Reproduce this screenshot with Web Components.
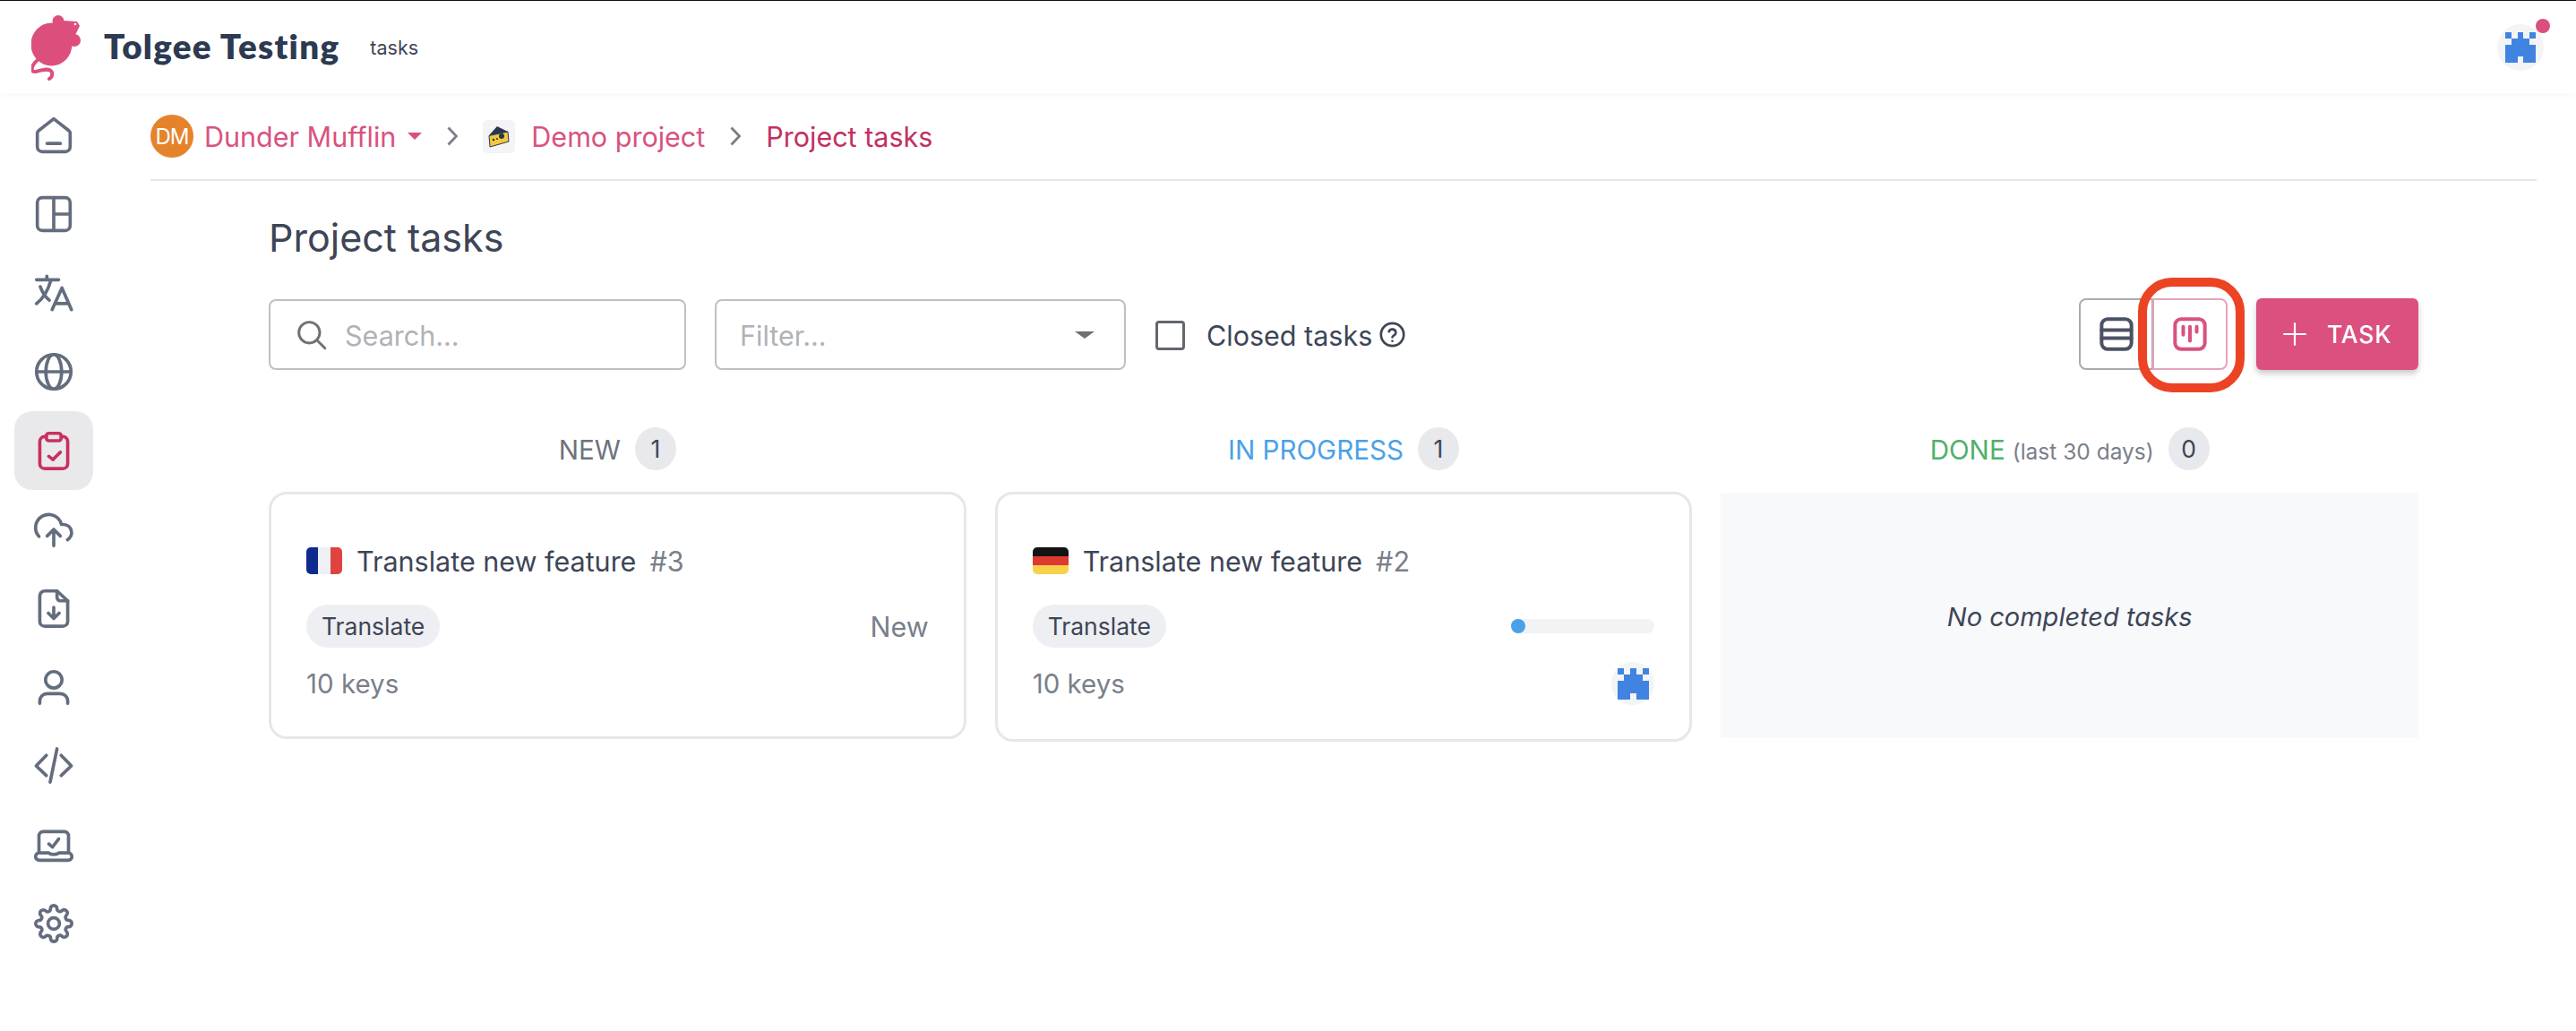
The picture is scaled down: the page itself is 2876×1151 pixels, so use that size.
<!DOCTYPE html>
<html lang="en">
<head>
<meta charset="utf-8">
<title>Project tasks</title>
<style>
    html, body { margin: 0; background: #fff; }
    body { font-family: Inter, "Liberation Sans", sans-serif; color: #3d4556; }
</style>
</head>
<body>
<tg-app></tg-app>
<script>
// icons, all drawn on a 24 unit grid with round strokes
const ICONS = {
    home: `<path d="M12 2l9.3 7.3a2 2 0 0 1 .7 1.5V19a3 3 0 0 1-3 3H5a3 3 0 0 1-3-3v-8.200a2 2 0 0 1 .7-1.500z"/><path d="M8 17h8"/>`,
    layout: `<rect x="2" y="2" width="20" height="20" rx="3"/><path d="M12 2v20M12 12h10"/>`,
    translate: `<path d="M1.500 4h13.500M7.800 1.800V4M10.200 4.500C8.500 10.500 5.500 15.500 1.500 18.500M3.800 8.200c1.200 3.200 3 6.200 5.500 8.200M11 22.200L17 9l5.800 13.200M13 18.500h8"/>`,
    globe: `<circle cx="12" cy="12" r="10.500"/><path d="M1.500 12h21"/><ellipse cx="12" cy="12" rx="4.800" ry="10.500"/>`,
    clipboard: `<path d="M7.500 3.500h-1a3 3 0 0 0-3 3V20a3 3 0 0 0 3 3h11a3 3 0 0 0 3-3V6.500a3 3 0 0 0-3-3h-1"/><rect x="7.500" y="1.500" width="9" height="4.500" rx="1.500"/><path d="M9 15.500l2.500 2L16 13"/>`,
    upload: `<path d="M16 16l-4-4-4 4M12 12v10"/><path d="M20.400 18.300A5 5 0 0 0 18 9h-1.300A8 8 0 1 0 3 16.300"/>`,
    file: `<path d="M14 1.500H6.500a3 3 0 0 0-3 3V20a3 3 0 0 0 3 3h11a3 3 0 0 0 3-3V7.500z"/><path d="M14 1.500V5.500a2 2 0 0 0 2 2h4.500M12 11.500v6.500M8.700 15l3.300 3.300 3.300-3.300"/>`,
    user: `<circle cx="12" cy="7.600" r="5"/><path d="M3.500 22v-1.500a4.500 4.500 0 0 1 4.500-4.500h8a4.500 4.500 0 0 1 4.500 4.500V22"/>`,
    code: `<path d="M7.500 5.600L1.300 12l6.200 5.900M16.500 5.600l6.200 6.400-6.200 5.900M14 1.600L9.800 21.900"/>`,
    laptop: `<path d="M3 17V6.500A2.500 2.500 0 0 1 5.500 4h13A2.500 2.500 0 0 1 21 6.500V17"/><path d="M3.200 17H9c1 1.300 5 1.300 6 0h5.800a2.200 2.200 0 0 1 0 4.500H3.200a2.200 2.200 0 0 1 0-4.500z"/><path d="M9 11.500l2.200 2L15 8.500"/>`,
    gear: `<circle cx="12" cy="12" r="3.500"/><path d="M19.400 15a1.650 1.650 0 0 0 .33 1.820l.06.06a2 2 0 0 1 0 2.830 2 2 0 0 1-2.830 0l-.06-.06a1.650 1.650 0 0 0-1.820-.33 1.650 1.650 0 0 0-1 1.510V21a2 2 0 0 1-2 2 2 2 0 0 1-2-2v-.09A1.650 1.650 0 0 0 9 19.400a1.650 1.650 0 0 0-1.820.33l-.06.06a2 2 0 0 1-2.830 0 2 2 0 0 1 0-2.830l.06-.06a1.650 1.650 0 0 0 .33-1.820 1.650 1.650 0 0 0-1.510-1H3a2 2 0 0 1-2-2 2 2 0 0 1 2-2h.09A1.650 1.650 0 0 0 4.600 9a1.650 1.650 0 0 0-.33-1.820l-.06-.06a2 2 0 0 1 0-2.830 2 2 0 0 1 2.830 0l.06.06a1.650 1.650 0 0 0 1.820.33H9a1.650 1.650 0 0 0 1-1.510V3a2 2 0 0 1 2-2 2 2 0 0 1 2 2v.09a1.650 1.650 0 0 0 1 1.510 1.650 1.650 0 0 0 1.820-.33l.06-.06a2 2 0 0 1 2.830 0 2 2 0 0 1 0 2.830l-.06.06a1.650 1.650 0 0 0-.33 1.820V9a1.650 1.650 0 0 0 1.510 1H21a2 2 0 0 1 2 2 2 2 0 0 1-2 2h-.09a1.650 1.650 0 0 0-1.510 1z"/>`,
    search: `<circle cx="10.500" cy="10.500" r="8"/><path d="M16.500 16.500l6 6"/>`,
    help: `<circle cx="12" cy="12" r="10.500"/><path d="M8.800 9.300a3.300 3.300 0 0 1 6.400 1c0 2.200-3.200 2.700-3.200 4.200"/><path d="M12 18h.01"/>`,
    rows: `<rect x="2" y="2" width="20" height="20" rx="4"/><path d="M2 9.300h20M2 14.700h20"/>`,
    kanban: `<rect x="2" y="2" width="20" height="20" rx="4"/><path d="M7.500 7v5.500M12 7v9.500M16.500 7v3.500"/>`,
    plus: `<path d="M12 1v22M1 12h22"/>`
}

class TgIcon extends HTMLElement {
    connectedCallback() {
        const size = this.getAttribute('size') || 44
        const width = this.getAttribute('stroke') || 2
        this.attachShadow({ mode: 'open' })
        this.shadowRoot.innerHTML = `
      <style>
        :host { display: block; width: ${size}px; height: ${size}px; flex: none; }
        svg { display: block; width: 100%; height: 100%; fill: none; stroke: currentColor; stroke-linecap: round; stroke-linejoin: round; overflow: visible; }
      </style>
      <svg viewBox="0 0 24 24" stroke-width="${width}">${ICONS[this.getAttribute('name')]}</svg>
    `
    }
}
customElements.define('tg-icon', TgIcon)

// the blue pixel castle avatar
class TgCastle extends HTMLElement {
    connectedCallback() {
        const size = this.getAttribute('size') || 48
        const cell = this.getAttribute('cell') || 34
        this.attachShadow({ mode: 'open' })
        this.shadowRoot.innerHTML = `
      <style>
        :host { display: flex; align-items: center; justify-content: center; width: ${size}px; height: ${size}px; border-radius: 50%; background: #f3f4f6; flex: none; }
        svg { display: block; width: ${cell}px; height: ${cell}px; fill: #4183e0; shape-rendering: crispEdges; }
      </style>
      <svg viewBox="0 0 5 5">
        <rect x="0" y="0" width="1" height="1"/><rect x="2" y="0" width="1" height="1"/><rect x="4" y="0" width="1" height="1"/>
        <rect x="1" y="1" width="3" height="1"/>
        <rect x="0" y="2" width="5" height="2"/>
        <rect x="0" y="4" width="2" height="1"/><rect x="3" y="4" width="2" height="1"/>
      </svg>
    `
    }
}
customElements.define('tg-castle', TgCastle)

class TgHeader extends HTMLElement {
    connectedCallback() {
        this.attachShadow({ mode: 'open' })
        this.shadowRoot.innerHTML = `
      <style>
        :host { display: flex; align-items: center; border-top: 1px solid #111; background: #fff; box-sizing: border-box; height: 104px; padding: 0 36px 0 35px; box-shadow: 0 3px 8px rgba(60,70,90,.04); position: relative; }
        .logo { width: 55px; height: 73px; display: block; margin-top: 1px; }
        .name { font: 800 38.500px Lato, sans-serif; color: #2c3a52; margin: -3px 0 0 26px; letter-spacing: 1.300px; }
        .tag { font-size: 21.500px; color: #3d4556; margin-left: 34px; }
        .user { margin-left: auto; position: relative; margin-top: 1px; }
        .dot { position: absolute; top: -6px; right: -7px; width: 16px; height: 16px; border-radius: 50%; background: #dc4f7d; }
      </style>
      <svg class="logo" viewBox="35 16 55 73" fill="#dc4f7d">
        <ellipse cx="57.500" cy="48.500" rx="23" ry="24"/>
        <path d="M60 26 L70 22 L86 23 L89 28 L84 38 L80 50 L60 50 Z"/>
        <circle cx="65" cy="22.500" r="6.500"/>
        <circle cx="83" cy="44" r="7"/>
        <circle cx="84" cy="26" r="1.300" fill="#fff"/>
        <path d="M42 66 C35 72 33 80 40 79 C47 77 56 74 58 80 C59 83 57 86 55 87" fill="none" stroke="#dc4f7d" stroke-width="4" stroke-linecap="round"/>
      </svg>
      <div class="name">Tolgee Testing</div>
      <div class="tag">tasks</div>
      <div class="user">
        <tg-castle size="52" cell="34"></tg-castle>
        <div class="dot"></div>
      </div>
    `
    }
}
customElements.define('tg-header', TgHeader)

class TgSidebar extends HTMLElement {
    connectedCallback() {
        const items = ['home', 'layout', 'translate', 'globe', 'clipboard', 'upload', 'file', 'user', 'code', 'laptop', 'gear']
        this.attachShadow({ mode: 'open' })
        this.shadowRoot.innerHTML = `
      <style>
        :host { display: flex; flex-direction: column; width: 120px; padding: 3px 16px 0; box-sizing: border-box; flex: none; color: #646d7e; }
        .item { display: flex; align-items: center; justify-content: center; width: 88px; height: 88px; border-radius: 20px; }
        .active { background: #e9e9eb; color: #c9305f; }
      </style>
      ${items.map(name => `<div class="item ${name === 'clipboard' ? 'active' : ''}"><tg-icon name="${name}"></tg-icon></div>`).join('')}
    `
    }
}
customElements.define('tg-sidebar', TgSidebar)

class TgBreadcrumbs extends HTMLElement {
    connectedCallback() {
        const chevron = `<svg class="chev" viewBox="0 0 12 22"><path d="M1.500 1.500L10.500 11L1.500 20.500"/></svg>`
        this.attachShadow({ mode: 'open' })
        this.shadowRoot.innerHTML = `
      <style>
        :host { display: flex; align-items: center; height: 98px; border-bottom: 2px solid #e4e6ea; box-sizing: border-box; font-size: 30.500px; color: #d9527f; }
        .avatar { width: 48px; height: 48px; border-radius: 50%; background: #e5832b; color: #fff; display: flex; align-items: center; justify-content: center; font-size: 24px; letter-spacing: -1px; }
        .org { margin-left: 12px; }
        .caret { width: 0; height: 0; border-left: 8px solid transparent; border-right: 8px solid transparent; border-top: 8px solid #d9527f; margin-left: 13px; }
        .chev { width: 12px; height: 22px; fill: none; stroke: #7b7f86; stroke-width: 2.800; margin: 0 28px; flex: none; }
        .first { margin-left: 28px; margin-right: 28px; }
        .cheese { width: 36px; height: 37px; background: #f3f4f6; border-radius: 5px; display: flex; align-items: center; justify-content: center; margin-right: 18px; }
        .cheese svg { width: 24px; height: 25px; display: block; }
        .current { color: #c3305f; }
      </style>
      <div class="avatar">DM</div>
      <div class="org">Dunder Mufflin</div>
      <div class="caret"></div>
      ${chevron.replace('chev', 'chev first')}
      <div class="cheese">
        <svg viewBox="0 0 24 25">
          <path d="M1 11 L10 1 L22 7 L22 9 Z" fill="#27374f"/>
          <path d="M1 11.500 L22 7 L23 18 L2 24 Z" fill="#f4c83c" stroke="#27374f" stroke-width="1"/>
          <circle cx="15" cy="12" r="3" fill="#27374f"/>
          <circle cx="6" cy="16" r="1.300" fill="#27374f"/>
          <circle cx="10" cy="15" r="1" fill="#27374f"/>
        </svg>
      </div>
      <div>Demo project</div>
      ${chevron}
      <div class="current">Project tasks</div>
    `
    }
}
customElements.define('tg-breadcrumbs', TgBreadcrumbs)

class TgField extends HTMLElement {
    connectedCallback() {
        this.attachShadow({ mode: 'open' })
        this.shadowRoot.innerHTML = `
      <style>
        :host { display: flex; align-items: center; height: 79px; border: 2px solid #bfc0c4; border-radius: 8px; box-sizing: border-box; padding: 2px 27px 0 26px; font-size: 30.500px; color: #b0b2b7; flex: none; }
        ::slotted(tg-icon) { color: #6f7174; margin: -2px 20px 0 2px; }
        .caret { margin-left: auto; }
      </style>
      <slot name="icon"></slot>
      <slot></slot>
      <span class="caret"><slot name="end"></slot></span>
    `
    }
}
customElements.define('tg-field', TgField)

class TgViewToggle extends HTMLElement {
    connectedCallback() {
        this.attachShadow({ mode: 'open' })
        this.shadowRoot.innerHTML = `
      <style>
        :host { display: flex; position: relative; height: 80px; flex: none; }
        .btn { width: 83px; box-sizing: border-box; display: flex; align-items: center; justify-content: center; border: 2px solid #a9abb1; border-radius: 8px 0 0 8px; color: #4b5263; }
        .on { border: 2px solid #e6a4bb; border-radius: 0 8px 8px 0; color: #d9527f; margin-left: -1px; width: 84px; }
        .mark { position: absolute; left: 66px; top: -23px; width: 119px; height: 128px; border: 10px solid #ec4324; border-radius: 38px; box-sizing: border-box; }
      </style>
      <div class="btn"><tg-icon name="rows" size="40" stroke="2.400"></tg-icon></div>
      <div class="btn on"><tg-icon name="kanban" size="40" stroke="2.400"></tg-icon></div>
      <div class="mark"></div>
    `
    }
}
customElements.define('tg-view-toggle', TgViewToggle)

class TgToolbar extends HTMLElement {
    connectedCallback() {
        this.attachShadow({ mode: 'open' })
        this.shadowRoot.innerHTML = `
      <style>
        :host { display: flex; align-items: center; height: 80px; }
        .search { width: 466px; }
        .filter { width: 459px; margin-left: 32px; }
        .drop { display: block; width: 0; height: 0; border-left: 11px solid transparent; border-right: 11px solid transparent; border-top: 8px solid #6f7174; margin-right: 6px; }
        .check { width: 33px; height: 33px; box-sizing: border-box; border: 3px solid #62666f; border-radius: 4px; margin: 2px 0 0 33px; flex: none; }
        .closed { font-size: 30.500px; color: #3d4556; margin: 2px 0 0 24px; }
        .help { margin: 1px 0 0 8px; color: #3d4556; }
        .toggle { margin-left: auto; }
        .add { display: flex; align-items: center; width: 181px; height: 80px; margin-left: 32px; box-sizing: border-box; padding-left: 30px; background: #db507e; color: #fff; border-radius: 6px; font-size: 26.500px; font-weight: 500; letter-spacing: .8px; box-shadow: 0 4px 6px rgba(60,60,70,.28); flex: none; }
        .add span { margin-left: 23px; }
      </style>
      <tg-field class="search"><tg-icon slot="icon" name="search" size="35" stroke="2"></tg-icon>Search...</tg-field>
      <tg-field class="filter">Filter...<i slot="end" class="drop"></i></tg-field>
      <div class="check"></div>
      <div class="closed">Closed tasks</div>
      <tg-icon class="help" name="help" size="29" stroke="2.200"></tg-icon>
      <tg-view-toggle class="toggle"></tg-view-toggle>
      <div class="add"><tg-icon name="plus" size="26" stroke="2"></tg-icon><span>TASK</span></div>
    `
    }
}
customElements.define('tg-toolbar', TgToolbar)

class TgColumn extends HTMLElement {
    connectedCallback() {
        const note = this.getAttribute('note')
        this.attachShadow({ mode: 'open' })
        this.shadowRoot.innerHTML = `
      <style>
        :host { display: flex; flex-direction: column; min-width: 0; }
        .head { display: flex; align-items: center; justify-content: center; height: 48px; margin-bottom: 24px; font-size: 29.600px; color: ${this.getAttribute('color')}; }
        .label { margin-top: 2px; }
        .note { font-size: 24.500px; color: #7a7f8a; margin-left: 8px; margin-top: 5px; }
        .count { width: 46px; height: 48px; border-radius: 50%; background: #e8e9ec; color: #3d4556; display: flex; align-items: center; justify-content: center; font-size: 26.500px; margin-left: 16px; }
      </style>
      <div class="head">
        <span class="label">${this.getAttribute('title')}</span>
        ${note ? `<span class="note">${note}</span>` : ''}
        <span class="count">${this.getAttribute('count')}</span>
      </div>
      <slot></slot>
    `
    }
}
customElements.define('tg-column', TgColumn)

class TgFlag extends HTMLElement {
    connectedCallback() {
        const stripes = this.getAttribute('lang') === 'fr'
            ? 'linear-gradient(90deg, #0f2a8f 33.300%, #eff0f3 33.300% 66.600%, #e0433f 66.600%)'
            : 'linear-gradient(180deg, #131313 33.300%, #dd3a2f 33.300% 66.600%, #f7d148 66.600%)'
        this.attachShadow({ mode: 'open' })
        this.shadowRoot.innerHTML = `
      <style>
        :host { display: block; width: 40px; height: 30px; border-radius: 5px; background: ${stripes}; flex: none; }
      </style>
    `
    }
}
customElements.define('tg-flag', TgFlag)

class TgCard extends HTMLElement {
    connectedCallback() {
        this.attachShadow({ mode: 'open' })
        this.shadowRoot.innerHTML = `
      <style>
        :host { display: block; border: 3px solid #e5e7eb; border-radius: 20px; box-sizing: border-box; padding: 56px 39px 0; font-size: 30.500px; height: ${this.getAttribute('height')}px; background: #fff; }
        .title { display: flex; align-items: center; height: 36px; color: #3d4556; }
        .name { margin-left: 16px; }
        .num { margin-left: 15px; color: #7a7f8a; }
        .row { display: flex; align-items: center; justify-content: space-between; margin-top: 31px; height: 48px; }
        .chip { display: flex; align-items: center; padding: 0 17px; height: 48px; border-radius: 24px; background: #eeeff2; font-size: 26.500px; color: #3d4556; }
        .foot { display: flex; align-items: center; justify-content: space-between; margin-top: 16px; height: 48px; color: #7a7f8a; font-size: 29.500px; }
      </style>
      <div class="title">
        <slot name="flag"></slot>
        <span class="name">${this.getAttribute('name')}</span>
        <span class="num">${this.getAttribute('num')}</span>
      </div>
      <div class="row">
        <span class="chip">Translate</span>
        <slot name="state"></slot>
      </div>
      <div class="foot">
        <span>10 keys</span>
        <slot name="assignee"></slot>
      </div>
    `
    }
}
customElements.define('tg-card', TgCard)

class TgProgress extends HTMLElement {
    connectedCallback() {
        this.attachShadow({ mode: 'open' })
        this.shadowRoot.innerHTML = `
      <style>
        :host { display: block; width: 160px; height: 16px; border-radius: 8px; background: #f1f3f5; }
        div { width: 16px; height: 16px; border-radius: 50%; background: #4ba1e8; }
      </style>
      <div></div>
    `
    }
}
customElements.define('tg-progress', TgProgress)

class TgEmpty extends HTMLElement {
    connectedCallback() {
        this.attachShadow({ mode: 'open' })
        this.shadowRoot.innerHTML = `
      <style>
        :host { display: flex; align-items: center; justify-content: center; height: 274px; margin-top: 1px; padding-top: 3px; box-sizing: border-box; background: #f8f9fb; font-style: italic; font-size: 29px; color: #3d4556; }
      </style>
      <slot></slot>
    `
    }
}
customElements.define('tg-empty', TgEmpty)

class TgApp extends HTMLElement {
    connectedCallback() {
        this.attachShadow({ mode: 'open' })
        this.shadowRoot.innerHTML = `
      <style>
        :host { display: block; min-height: 1151px; background: #fff; }
        .body { display: flex; }
        main { flex: 1; min-width: 0; padding: 0 44px 0 48px; }
        .page { width: 2400px; margin-left: 132px; }
        h1 { margin: 0; font-size: 43px; font-weight: 400; line-height: 54px; color: #3d4556; padding-top: 36px; margin-bottom: 41px; }
        .board { display: grid; grid-template-columns: repeat(3, 1fr); gap: 32px; align-items: start; margin-top: 64px; }
      </style>
      <tg-header></tg-header>
      <div class="body">
        <tg-sidebar></tg-sidebar>
        <main>
          <tg-breadcrumbs></tg-breadcrumbs>
          <div class="page">
            <h1>Project tasks</h1>
            <tg-toolbar></tg-toolbar>
            <div class="board">
              <tg-column title="NEW" count="1" color="#6d7380">
                <tg-card name="Translate new feature" num="#3" height="276">
                  <tg-flag slot="flag" lang="fr"></tg-flag>
                  <span slot="state" style="color:#7a7f8a">New</span>
                </tg-card>
              </tg-column>
              <tg-column title="IN PROGRESS" count="1" color="#4ba1e8">
                <tg-card name="Translate new feature" num="#2" height="279">
                  <tg-flag slot="flag" lang="de"></tg-flag>
                  <tg-progress slot="state"></tg-progress>
                  <tg-castle slot="assignee" size="48" cell="35"></tg-castle>
                </tg-card>
              </tg-column>
              <tg-column title="DONE" note="(last 30 days)" count="0" color="#50b06b">
                <tg-empty>No completed tasks</tg-empty>
              </tg-column>
            </div>
          </div>
        </main>
      </div>
    `
    }
}
customElements.define('tg-app', TgApp)
</script>
</body>
</html>
